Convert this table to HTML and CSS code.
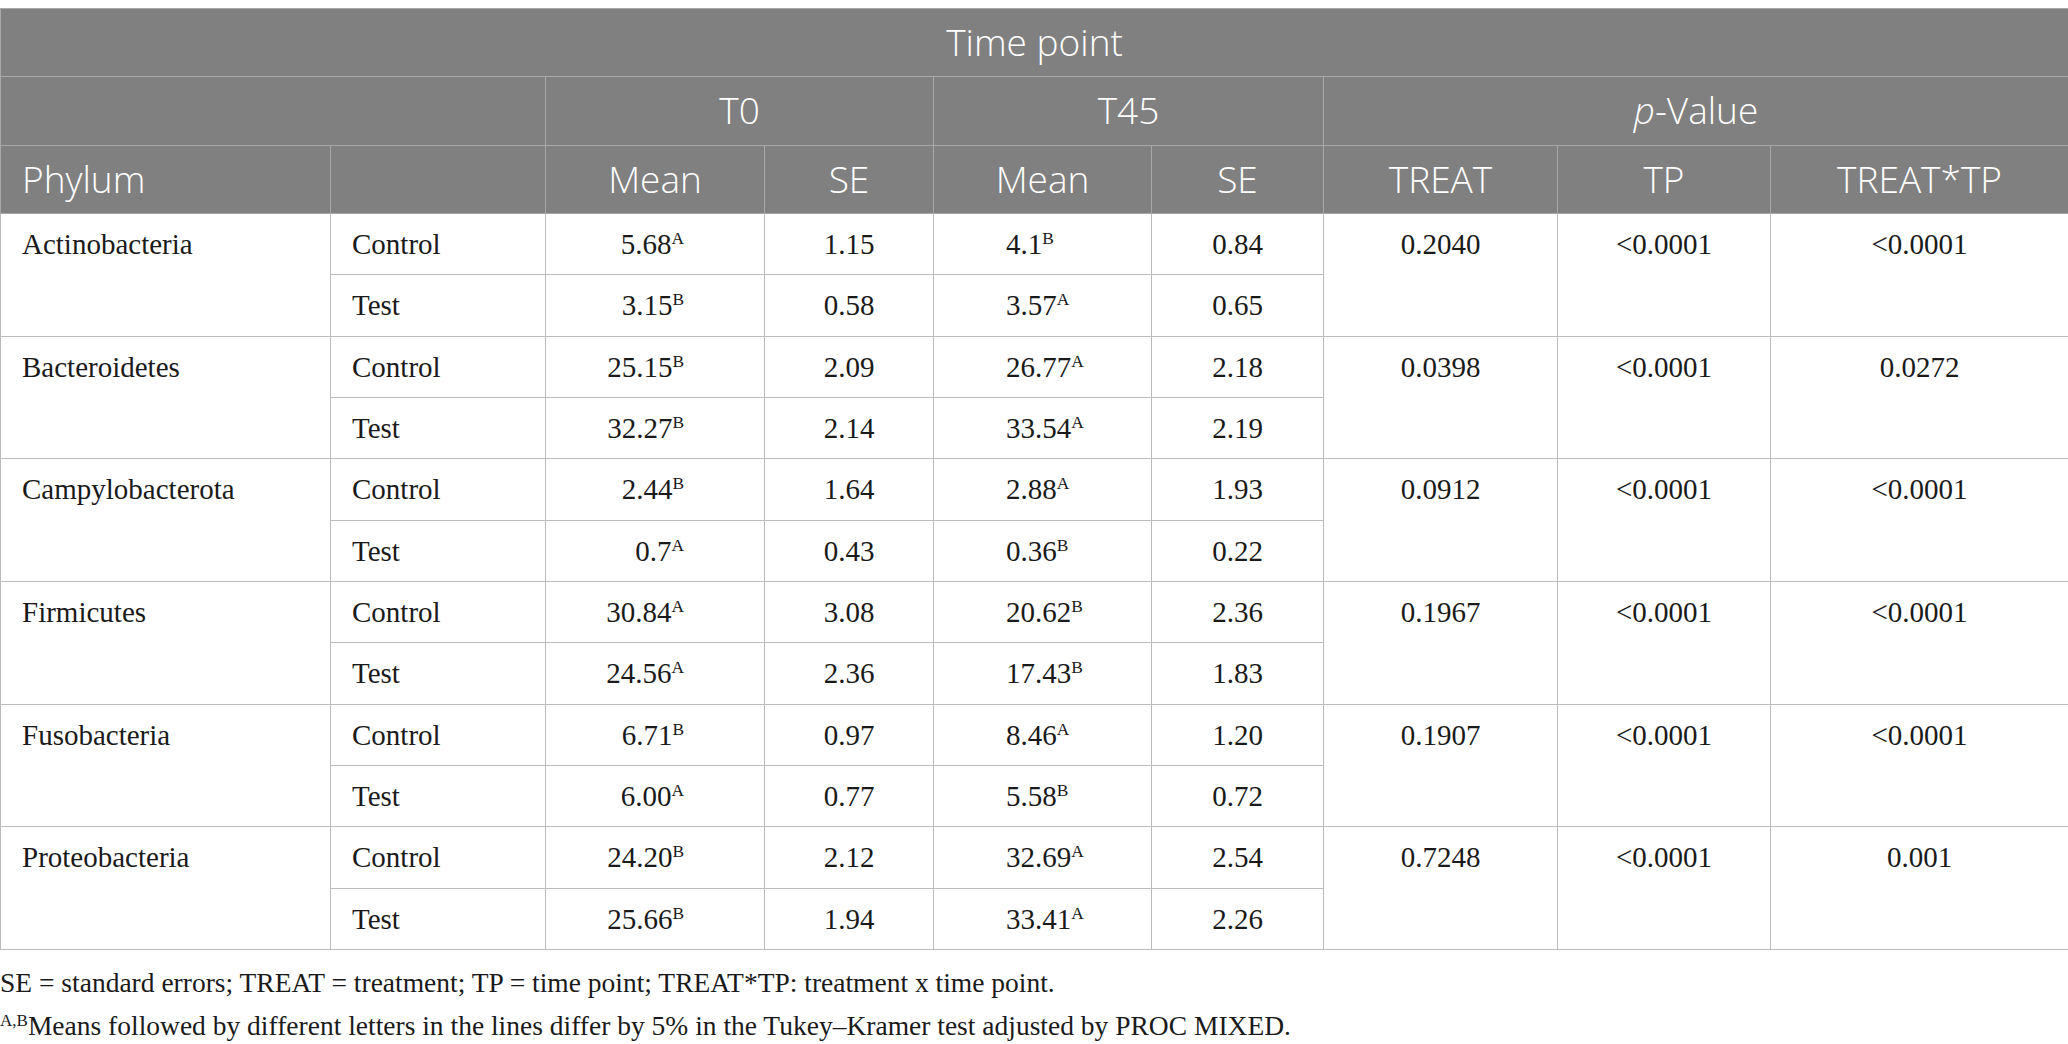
FILE: index.html
```html
<!DOCTYPE html>
<html lang="en">
<head>
    <meta charset="UTF-8">
    <title>Phylum abundance by time point</title>
    <link rel="stylesheet" href="styles.css">
</head>
<body>
    <table class="data-table">
        <colgroup>
            <col style="width: 330px">
            <col style="width: 215px">
            <col style="width: 219px">
            <col style="width: 169px">
            <col style="width: 218px">
            <col style="width: 172px">
            <col style="width: 234px">
            <col style="width: 213px">
            <col style="width: 298px">
        </colgroup>
        <thead>
            <tr>
                <th colspan="9">Time point</th>
            </tr>
            <tr>
                <th colspan="2"></th>
                <th colspan="2">T0</th>
                <th colspan="2">T45</th>
                <th colspan="3"><i>p</i>-Value</th>
            </tr>
            <tr>
                <th class="left">Phylum</th>
                <th></th>
                <th>Mean</th>
                <th>SE</th>
                <th>Mean</th>
                <th>SE</th>
                <th>TREAT</th>
                <th>TP</th>
                <th>TREAT*TP</th>
            </tr>
        </thead>
        <tbody>
            <tr>
                <td rowspan="2">Actinobacteria</td>
                <td>Control</td>
                <td class="mean-t0">5.68<sup>A</sup></td>
                <td class="num">1.15</td>
                <td class="mean-t45">4.1<sup>B</sup></td>
                <td class="num">0.84</td>
                <td class="num" rowspan="2">0.2040</td>
                <td class="num" rowspan="2">&lt;0.0001</td>
                <td class="num" rowspan="2">&lt;0.0001</td>
            </tr>
            <tr>
                <td>Test</td>
                <td class="mean-t0">3.15<sup>B</sup></td>
                <td class="num">0.58</td>
                <td class="mean-t45">3.57<sup>A</sup></td>
                <td class="num">0.65</td>
            </tr>
            <tr>
                <td rowspan="2">Bacteroidetes</td>
                <td>Control</td>
                <td class="mean-t0">25.15<sup>B</sup></td>
                <td class="num">2.09</td>
                <td class="mean-t45">26.77<sup>A</sup></td>
                <td class="num">2.18</td>
                <td class="num" rowspan="2">0.0398</td>
                <td class="num" rowspan="2">&lt;0.0001</td>
                <td class="num" rowspan="2">0.0272</td>
            </tr>
            <tr>
                <td>Test</td>
                <td class="mean-t0">32.27<sup>B</sup></td>
                <td class="num">2.14</td>
                <td class="mean-t45">33.54<sup>A</sup></td>
                <td class="num">2.19</td>
            </tr>
            <tr>
                <td rowspan="2">Campylobacterota</td>
                <td>Control</td>
                <td class="mean-t0">2.44<sup>B</sup></td>
                <td class="num">1.64</td>
                <td class="mean-t45">2.88<sup>A</sup></td>
                <td class="num">1.93</td>
                <td class="num" rowspan="2">0.0912</td>
                <td class="num" rowspan="2">&lt;0.0001</td>
                <td class="num" rowspan="2">&lt;0.0001</td>
            </tr>
            <tr>
                <td>Test</td>
                <td class="mean-t0">0.7<sup>A</sup></td>
                <td class="num">0.43</td>
                <td class="mean-t45">0.36<sup>B</sup></td>
                <td class="num">0.22</td>
            </tr>
            <tr>
                <td rowspan="2">Firmicutes</td>
                <td>Control</td>
                <td class="mean-t0">30.84<sup>A</sup></td>
                <td class="num">3.08</td>
                <td class="mean-t45">20.62<sup>B</sup></td>
                <td class="num">2.36</td>
                <td class="num" rowspan="2">0.1967</td>
                <td class="num" rowspan="2">&lt;0.0001</td>
                <td class="num" rowspan="2">&lt;0.0001</td>
            </tr>
            <tr>
                <td>Test</td>
                <td class="mean-t0">24.56<sup>A</sup></td>
                <td class="num">2.36</td>
                <td class="mean-t45">17.43<sup>B</sup></td>
                <td class="num">1.83</td>
            </tr>
            <tr>
                <td rowspan="2">Fusobacteria</td>
                <td>Control</td>
                <td class="mean-t0">6.71<sup>B</sup></td>
                <td class="num">0.97</td>
                <td class="mean-t45">8.46<sup>A</sup></td>
                <td class="num">1.20</td>
                <td class="num" rowspan="2">0.1907</td>
                <td class="num" rowspan="2">&lt;0.0001</td>
                <td class="num" rowspan="2">&lt;0.0001</td>
            </tr>
            <tr>
                <td>Test</td>
                <td class="mean-t0">6.00<sup>A</sup></td>
                <td class="num">0.77</td>
                <td class="mean-t45">5.58<sup>B</sup></td>
                <td class="num">0.72</td>
            </tr>
            <tr>
                <td rowspan="2">Proteobacteria</td>
                <td>Control</td>
                <td class="mean-t0">24.20<sup>B</sup></td>
                <td class="num">2.12</td>
                <td class="mean-t45">32.69<sup>A</sup></td>
                <td class="num">2.54</td>
                <td class="num" rowspan="2">0.7248</td>
                <td class="num" rowspan="2">&lt;0.0001</td>
                <td class="num" rowspan="2">0.001</td>
            </tr>
            <tr>
                <td>Test</td>
                <td class="mean-t0">25.66<sup>B</sup></td>
                <td class="num">1.94</td>
                <td class="mean-t45">33.41<sup>A</sup></td>
                <td class="num">2.26</td>
            </tr>
        </tbody>
    </table>

    <div class="notes">
        <p>SE = standard errors; TREAT = treatment; TP = time point; TREAT*TP: treatment x time point.</p>
        <p><sup>A,B</sup>Means followed by different letters in the lines differ by 5% in the Tukey–Kramer test adjusted by PROC MIXED.</p>
    </div>
</body>
</html>
```

FILE: styles.css
```css
body {
    margin: 0;
    background: #fff;
    color: #1a1a1a;
    font-family: "Liberation Serif", "Times New Roman", serif;
}

.data-table {
    width: 2068px;
    margin-top: 8px;
    border-collapse: collapse;
    table-layout: fixed;
}

.data-table th {
    background-color: #808080;
    color: #fff;
    font-family: "Open Sans", "Noto Sans", sans-serif;
    font-weight: 300;
    font-size: 37px;
    line-height: 50px;
    padding: 8px 21px 9.33px;
    border: 1px solid #a8a8a8;
    text-align: center;
    white-space: nowrap;
}

.data-table th.left {
    text-align: left;
}

.data-table td {
    font-size: 29px;
    line-height: 34px;
    padding: 13px 21px 13.33px;
    border: 1px solid #bcbcbc;
    vertical-align: top;
    text-align: left;
    white-space: nowrap;
}

.data-table td.num {
    text-align: center;
}

.data-table td.mean-t0 {
    text-align: right;
    padding-right: 80px;
}

.data-table td.mean-t45 {
    padding-left: 72px;
}

sup {
    font-size: 0.6em;
    line-height: 0;
    vertical-align: 0.55em;
}

.notes {
    margin-top: 11px;
    font-size: 27.5px;
    line-height: 43px;
}

.notes p {
    margin: 0;
}

.notes sup {
    font-size: 0.62em;
    vertical-align: 0.5em;
}
```
